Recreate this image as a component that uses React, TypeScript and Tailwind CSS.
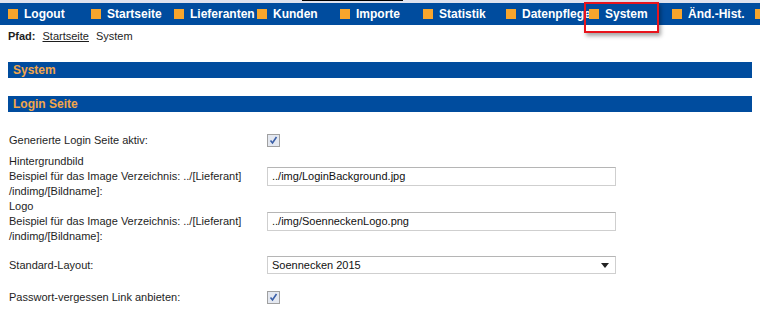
const navItems = ['Logout', 'Startseite', 'Lieferanten', 'Kunden', 'Importe', 'Statistik', 'Datenpflege', 'System', 'Änd.-Hist.']

function Check() {
  return (
    <span className="inline-flex w-[13px] h-[13px] items-center justify-center border border-[#a0a0a0] bg-[#e4e8f0]">
      <svg width="9" height="9" viewBox="0 0 9 9">
        <path d="M1.5 4.5 L3.5 7 L7.5 1" fill="none" stroke="#3a5fa8" strokeWidth="1.6" />
      </svg>
    </span>
  )
}

function TextBox({ value }: { value: string }) {
  return (
    <div className="w-[349px] h-[19px] border border-[#cfcfcf] border-t-[#b5b5b5] bg-white flex items-center pl-[4px] text-[11px] text-[#111]">
      {value}
    </div>
  )
}

export default function App() {
  return (
    <div className="relative w-[760px] h-[309px] overflow-hidden bg-white text-[#1e1e1e] font-['Liberation_Sans',Arial,sans-serif] text-[11px]">
      {/* top strip */}
      <div className="h-[3px] bg-[#dfe2ee] flex">
        <div className="ml-[302px] w-[101px] h-px bg-black" />
      </div>

      {/* NAV */}
      <div className="h-[22px] bg-[#004c9e] flex items-center pl-2 overflow-hidden">
        {navItems.map(item => (
          <div key={item} className="w-[83px] shrink-0 flex items-center gap-[6px] whitespace-nowrap">
            <span className="w-[10px] h-[10px] shrink-0 bg-[#f7a52c]" />
            <span className="text-white font-bold text-[12px] leading-[16px]">{item}</span>
          </div>
        ))}
        <span className="w-[10px] h-[10px] shrink-0 bg-[#f7a52c]" />
      </div>

      {/* Pfad */}
      <div className="h-[22px] flex items-center pl-[8px]">
        <span className="font-bold">Pfad:</span>
        <span className="ml-[7px] underline">Startseite</span>
        <span className="ml-[7px]">System</span>
      </div>

      <div className="px-2 mt-[15px]">
        <div className="h-[16px] bg-[#004c9e] flex items-center pl-[5px] text-[#f3a64a] font-bold text-[12px]">System</div>
        <div className="h-[16px] bg-[#004c9e] flex items-center pl-[5px] text-[#f3a64a] font-bold text-[12px] mt-[18px]">Login Seite</div>
      </div>

      <div className="pl-[9px] mt-[14px] leading-[15px]">
        <div className="h-[28px] flex items-center">
          <div className="w-[258px]">Generierte Login Seite aktiv:</div>
          <Check />
        </div>
        <div className="h-[45px] flex items-center">
          <div className="w-[258px]">
            <div>Hintergrundbild</div>
            <div>Beispiel für das Image Verzeichnis: ../[Lieferant]</div>
            <div>/indimg/[Bildname]:</div>
          </div>
          <TextBox value="../img/LoginBackground.jpg" />
        </div>
        <div className="h-[45px] flex items-center">
          <div className="w-[258px]">
            <div>Logo</div>
            <div>Beispiel für das Image Verzeichnis: ../[Lieferant]</div>
            <div>/indimg/[Bildname]:</div>
          </div>
          <TextBox value="../img/SoenneckenLogo.png" />
        </div>
        <div className="h-[42px] flex items-center">
          <div className="w-[258px]">Standard-Layout:</div>
          <div className="w-[349px] h-[18px] border border-[#cfcfcf] border-t-[#b5b5b5] bg-white flex items-center justify-between pl-[4px] pr-[6px] text-[11px] text-[#111]">
            <span>Soennecken 2015</span>
            <svg width="8" height="5" viewBox="0 0 8 5">
              <path d="M0 0 H8 L4 5 Z" fill="#222" />
            </svg>
          </div>
        </div>
        <div className="h-[22px] flex items-center">
          <div className="w-[258px]">Passwort-vergessen Link anbieten:</div>
          <Check />
        </div>
      </div>

      {/* annotation highlight */}
      <div className="absolute left-[584px] top-[2px] w-[75px] h-[31px] border-2 border-[#e8141c] shadow-[2px_3px_4px_rgba(0,0,0,0.35)]" />
    </div>
  )
}
